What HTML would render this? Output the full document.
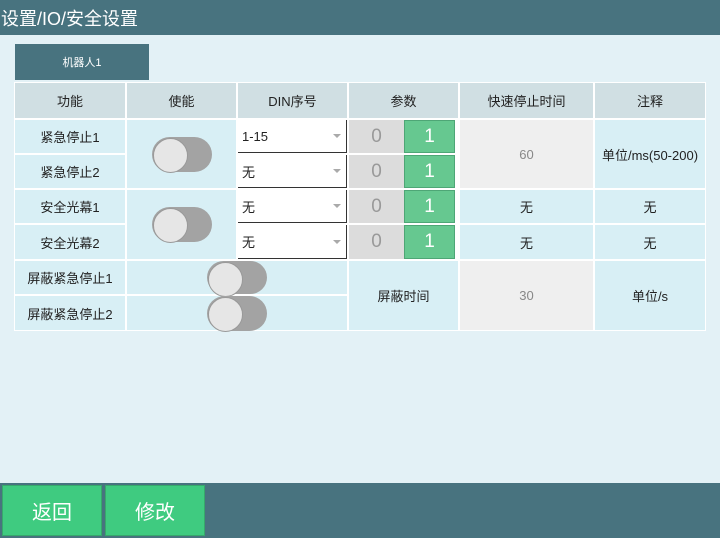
<!DOCTYPE html>
<html><head><meta charset="utf-8"><style>
*{margin:0;padding:0;box-sizing:border-box}
body{width:720px;height:538px;background:#e3f1f6;position:relative;overflow:hidden;font-family:"Liberation Sans","Noto Sans CJK SC",sans-serif;font-size:13px;color:#222}
.a{position:absolute;display:flex;align-items:center;justify-content:center}
.h{background:#d0dfe3}
.d{background:#d8eff5}
.g{background:#efefef;color:#888}
.dd{background:#fff;border-right:1px solid #333;border-bottom:1px solid #333;justify-content:flex-start;padding-left:4px}
.dd:after{content:"";position:absolute;right:5px;top:50%;margin-top:-2px;border:4px solid transparent;border-top:4px solid #aaa}
.z{background:#dcdcdc;color:#999;font-size:19px}
.o{background:#66c890;color:#fff;font-size:19px;border:1px solid #4ea676}
.t{position:absolute;width:60px;height:35px;border-radius:18px;background:#a3a3a3}
.t:before{content:"";position:absolute;left:1px;top:1px;width:33px;height:33px;border-radius:50%;background:#e6e6e6;border:1px solid #999}
.b{background:#3fcb80;color:#fff;font-size:20px;border:1px solid #37a86b}
</style></head><body>
<div class="a" style="left:0;top:0;width:720px;height:35px;background:#48737f;color:#fff;font-size:18px;justify-content:flex-start;padding-left:1px">设置/IO/安全设置</div>
<div class="a" style="left:15px;top:44px;width:134px;height:36px;background:#48737f;color:#fff;font-size:11px">机器人1</div>
<div class="a" style="left:14px;top:82px;width:692px;height:249px;background:#fff"></div>

<div class="a h" style="left:15px;top:83px;width:110px;height:35px">功能</div>
<div class="a h" style="left:127px;top:83px;width:109px;height:35px">使能</div>
<div class="a h" style="left:238px;top:83px;width:109px;height:35px">DIN序号</div>
<div class="a h" style="left:349px;top:83px;width:109px;height:35px">参数</div>
<div class="a h" style="left:460px;top:83px;width:133px;height:35px">快速停止时间</div>
<div class="a h" style="left:595px;top:83px;width:110px;height:35px">注释</div>

<div class="a d" style="left:15px;top:120px;width:110px;height:33px">紧急停止1</div>
<div class="a d" style="left:15px;top:155px;width:110px;height:33px">紧急停止2</div>
<div class="a d" style="left:15px;top:190px;width:110px;height:33px">安全光幕1</div>
<div class="a d" style="left:15px;top:225px;width:110px;height:34px">安全光幕2</div>
<div class="a d" style="left:15px;top:261px;width:110px;height:33px">屏蔽紧急停止1</div>
<div class="a d" style="left:15px;top:296px;width:110px;height:34px">屏蔽紧急停止2</div>

<div class="a d" style="left:127px;top:120px;width:109px;height:68px"></div>
<div class="a d" style="left:127px;top:190px;width:109px;height:69px"></div>
<div class="a d" style="left:127px;top:261px;width:220px;height:33px"></div>
<div class="a d" style="left:127px;top:296px;width:220px;height:34px"></div>
<div class="t" style="left:152px;top:137px"></div>
<div class="t" style="left:152px;top:207px"></div>
<div class="t" style="left:207px;top:261px;height:33px"></div>
<div class="t" style="left:207px;top:296px"></div>

<div class="a dd" style="left:238px;top:120px;width:109px;height:33px">1-15</div>
<div class="a dd" style="left:238px;top:155px;width:109px;height:33px">无</div>
<div class="a dd" style="left:238px;top:190px;width:109px;height:33px">无</div>
<div class="a dd" style="left:238px;top:225px;width:109px;height:34px">无</div>

<div class="a z" style="left:349px;top:120px;width:55px;height:33px">0</div>
<div class="a o" style="left:404px;top:120px;width:51px;height:33px">1</div>
<div class="a z" style="left:349px;top:155px;width:55px;height:33px">0</div>
<div class="a o" style="left:404px;top:155px;width:51px;height:33px">1</div>
<div class="a z" style="left:349px;top:190px;width:55px;height:33px">0</div>
<div class="a o" style="left:404px;top:190px;width:51px;height:33px">1</div>
<div class="a z" style="left:349px;top:225px;width:55px;height:34px">0</div>
<div class="a o" style="left:404px;top:225px;width:51px;height:34px">1</div>
<div class="a d" style="left:349px;top:261px;width:109px;height:69px">屏蔽时间</div>

<div class="a g" style="left:460px;top:120px;width:133px;height:68px">60</div>
<div class="a d" style="left:460px;top:190px;width:133px;height:33px">无</div>
<div class="a d" style="left:460px;top:225px;width:133px;height:34px">无</div>
<div class="a g" style="left:460px;top:261px;width:133px;height:69px">30</div>

<div class="a d" style="left:595px;top:120px;width:110px;height:68px">单位/ms(50-200)</div>
<div class="a d" style="left:595px;top:190px;width:110px;height:33px">无</div>
<div class="a d" style="left:595px;top:225px;width:110px;height:34px">无</div>
<div class="a d" style="left:595px;top:261px;width:110px;height:69px">单位/s</div>

<div class="a" style="left:0;top:483px;width:720px;height:55px;background:#48737f"></div>
<div class="a b" style="left:2px;top:485px;width:100px;height:51px">返回</div>
<div class="a b" style="left:105px;top:485px;width:100px;height:51px">修改</div>
</body></html>
